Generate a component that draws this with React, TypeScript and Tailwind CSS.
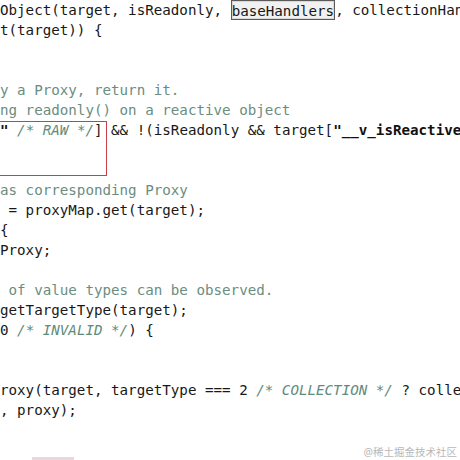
const mono = "font-['DejaVu_Sans_Mono','Liberation_Mono',monospace]";

type Seg = { t: string; k?: 'c' | 'i' | 's' | 'box' };

const lines: Seg[][] = [
  [
    { t: 'Object(target, isReadonly, ' },
    { t: 'baseHandlers', k: 'box' },
    { t: ', collectionHandlers, proxyMap) {' }
  ],
  [{ t: 't(target)) {' }],
  [],
  [],
  [{ t: 'y a Proxy, return it.', k: 'c' }],
  [{ t: 'ng readonly() on a reactive object', k: 'c' }],
  [
    { t: '"', k: 's' },
    { t: ' ' },
    { t: '/* RAW */', k: 'i' },
    { t: '] && !(isReadonly && target[' },
    { t: '"__v_isReactive"', k: 's' },
    { t: ' ' },
    { t: '/* IS_REACTIVE */', k: 'i' }
  ],
  [],
  [],
  [{ t: 'as corresponding Proxy', k: 'c' }],
  [{ t: ' = proxyMap.get(target);' }],
  [{ t: '{' }],
  [{ t: 'Proxy;' }],
  [],
  [{ t: ' of value types can be observed.', k: 'c' }],
  [{ t: 'getTargetType(target);' }],
  [{ t: '0 ' }, { t: '/* INVALID */', k: 'i' }, { t: ') {' }],
  [],
  [],
  [
    { t: 'roxy(target, targetType === 2 ' },
    { t: '/* COLLECTION */', k: 'i' },
    { t: ' ? collectionHandlers : baseHandlers);' }
  ],
  [{ t: ', proxy);' }],
  [],
  []
];

function Segment({ seg }: { seg: Seg }) {
  if (seg.k === 'c') return <span className="text-[#6b8d81]">{seg.t}</span>;
  if (seg.k === 'i') return <span className="italic text-[#5f8b7c]">{seg.t}</span>;
  if (seg.k === 's') return <span className="font-bold text-[#111]">{seg.t}</span>;
  if (seg.k === 'box')
    return (
      <span className="border border-[#5a5a5a] bg-[#f1f1f1] shadow-[inset_0_0_0_1px_#d8d8d8]">{seg.t}</span>
    );
  return <span>{seg.t}</span>;
}

export default function App() {
  return (
    <div className="relative w-[460px] h-[460px] overflow-hidden bg-white">
      {/* code lines */}
      <div className={`${mono} flex flex-col text-[14.2px] leading-[20px] text-[#181818] whitespace-pre`}>
        {lines.map((line, i) => (
          <div key={i} className="flex h-[20px]">
            {line.map((seg, j) => (
              <Segment key={j} seg={seg} />
            ))}
          </div>
        ))}
      </div>

      {/* red highlight box */}
      <div className="absolute left-[-4px] top-[121px] w-[111px] h-[55px] border-[1.5px] border-[#c8404a]" />

      {/* top edge of another box at the bottom */}
      <div className="absolute left-[32px] top-[457px] w-[42px] h-[3px] bg-[#ecd6de]" />

      {/* watermark */}
      <div className="absolute right-[3px] top-[445px] text-[10.5px] leading-[14px] text-[#b8b8b8] font-['Noto_Sans','Noto_Sans_CJK_SC',sans-serif]">
        @稀土掘金技术社区
      </div>
    </div>
  );
}
